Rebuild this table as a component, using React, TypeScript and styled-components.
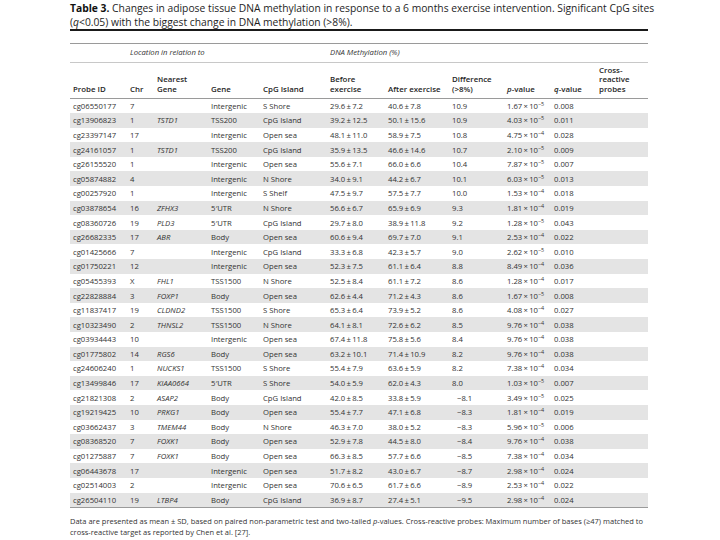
import React from "react";
import styled, { createGlobalStyle } from "styled-components";

const GlobalStyle = createGlobalStyle`
  html, body { margin: 0; padding: 0; background: #ffffff; }
  body { font-family: "Open Sans", "Liberation Sans", sans-serif; color: #2b2b2b; }
`;

const Page = styled.div`
  width: 720px;
  height: 540px;
  box-sizing: border-box;
  padding: 2px 0 0 70px;
  overflow: hidden;
`;

const Caption = styled.p`
  margin: 0;
  width: 640px;
  font-size: 10.3px;
  line-height: 13.5px;
  color: #1e1e1e;
  white-space: nowrap;
  b { font-weight: 700; color: #111; }
`;

const ThickRule = styled.div`
  width: 578px;
  height: 2px;
  background: #1a1a1a;
  margin-bottom: 12px;
`;

const Table = styled.table`
  width: 578px;
  border-collapse: collapse;
  table-layout: fixed;
  border-top: 1px solid #9a9a9a;
  border-bottom: 1px solid #9a9a9a;
  font-size: 7.7px;
`;

const GroupRow = styled.tr`
  height: 19px;
`;

const GroupCell = styled.th`
  font-style: italic;
  font-weight: 400;
  text-align: left;
  vertical-align: top;
  padding: 3px 0 0 3px;
  font-size: 7.7px;
  color: #333;
`;

const HeadRow = styled.tr`
  height: 36px;
  border-top: 1px solid #c8c8c8;
  border-bottom: 1px solid #9a9a9a;
`;

const HeadCell = styled.th`
  font-weight: 600;
  text-align: left;
  vertical-align: bottom;
  padding: 0 0 4px 3px;
  line-height: 9.5px;
  font-size: 7.9px;
  color: #262626;
`;

const Row = styled.tr<{ $shade: boolean }>`
  height: 14.6px;
  background: ${(p) => (p.$shade ? "#e4e4e4" : "#ffffff")};
`;

const Cell = styled.td<{ $italic?: boolean; $neg?: boolean }>`
  padding: 0 0 0 ${(p) => (p.$neg ? "8px" : "3px")};
  white-space: nowrap;
  font-style: ${(p) => (p.$italic ? "italic" : "normal")};
  color: #333;
  vertical-align: middle;
  sup { font-size: 5.4px; vertical-align: 3px; line-height: 0; }
`;

const Footnote = styled.p`
  margin: 8px 0 0 0;
  width: 640px;
  font-size: 7.5px;
  line-height: 11px;
  color: #333;
  white-space: nowrap;
`;

type RowData = [string, string, string, string, string, string, string, string, string, string, string];

const rows: RowData[] = [
  ["cg06550177", "7", "", "Intergenic", "S Shore", "29.6±7.2", "40.6±7.8", "10.9", "1.67", "−5", "0.008"],
  ["cg13906823", "1", "TSTD1", "TSS200", "CpG Island", "39.2±12.5", "50.1±15.6", "10.9", "4.03", "−5", "0.011"],
  ["cg23397147", "17", "", "Intergenic", "Open sea", "48.1±11.0", "58.9±7.5", "10.8", "4.75", "−4", "0.028"],
  ["cg24161057", "1", "TSTD1", "TSS200", "CpG Island", "35.9±13.5", "46.6±14.6", "10.7", "2.10", "−5", "0.009"],
  ["cg26155520", "1", "", "Intergenic", "Open sea", "55.6±7.1", "66.0±6.6", "10.4", "7.87", "−5", "0.007"],
  ["cg05874882", "4", "", "Intergenic", "N Shore", "34.0±9.1", "44.2±6.7", "10.1", "6.03", "−5", "0.013"],
  ["cg00257920", "1", "", "Intergenic", "S Shelf", "47.5±9.7", "57.5±7.7", "10.0", "1.53", "−4", "0.018"],
  ["cg03878654", "16", "ZFHX3", "5′UTR", "N Shore", "56.6±6.7", "65.9±6.9", "9.3", "1.81", "−4", "0.019"],
  ["cg08360726", "19", "PLD3", "5′UTR", "CpG Island", "29.7±8.0", "38.9±11.8", "9.2", "1.28", "−5", "0.043"],
  ["cg26682335", "17", "ABR", "Body", "Open sea", "60.6±9.4", "69.7±7.0", "9.1", "2.53", "−4", "0.022"],
  ["cg01425666", "7", "", "Intergenic", "CpG Island", "33.3±6.8", "42.3±5.7", "9.0", "2.62", "−5", "0.010"],
  ["cg01750221", "12", "", "Intergenic", "Open sea", "52.3±7.5", "61.1±6.4", "8.8", "8.49", "−4", "0.036"],
  ["cg05455393", "X", "FHL1", "TSS1500", "N Shore", "52.5±8.4", "61.1±7.2", "8.6", "1.28", "−4", "0.017"],
  ["cg22828884", "3", "FOXP1", "Body", "Open sea", "62.6±4.4", "71.2±4.3", "8.6", "1.67", "−5", "0.008"],
  ["cg11837417", "19", "CLDND2", "TSS1500", "S Shore", "65.3±6.4", "73.9±5.2", "8.6", "4.08", "−4", "0.027"],
  ["cg10323490", "2", "THNSL2", "TSS1500", "N Shore", "64.1±8.1", "72.6±6.2", "8.5", "9.76", "−4", "0.038"],
  ["cg03934443", "10", "", "Intergenic", "Open sea", "67.4±11.8", "75.8±5.6", "8.4", "9.76", "−4", "0.038"],
  ["cg01775802", "14", "RGS6", "Body", "Open sea", "63.2±10.1", "71.4±10.9", "8.2", "9.76", "−4", "0.038"],
  ["cg24606240", "1", "NUCKS1", "TSS1500", "S Shore", "55.4±7.9", "63.6±5.9", "8.2", "7.38", "−4", "0.034"],
  ["cg13499846", "17", "KIAA0664", "5′UTR", "S Shore", "54.0±5.9", "62.0±4.3", "8.0", "1.03", "−5", "0.007"],
  ["cg21821308", "2", "ASAP2", "Body", "CpG Island", "42.0±8.5", "33.8±5.9", "−8.1", "3.49", "−5", "0.025"],
  ["cg19219425", "10", "PRKG1", "Body", "Open sea", "55.4±7.7", "47.1±6.8", "−8.3", "1.81", "−4", "0.019"],
  ["cg03662437", "3", "TMEM44", "Body", "N Shore", "46.3±7.0", "38.0±5.2", "−8.3", "5.96", "−5", "0.006"],
  ["cg08368520", "7", "FOXK1", "Body", "Open sea", "52.9±7.8", "44.5±8.0", "−8.4", "9.76", "−4", "0.038"],
  ["cg01275887", "7", "FOXK1", "Body", "Open sea", "66.3±8.5", "57.7±6.6", "−8.5", "7.38", "−4", "0.034"],
  ["cg06443678", "17", "", "Intergenic", "Open sea", "51.7±8.2", "43.0±6.7", "−8.7", "2.98", "−4", "0.024"],
  ["cg02514003", "2", "", "Intergenic", "Open sea", "70.6±6.5", "61.7±6.6", "−8.9", "2.53", "−4", "0.022"],
  ["cg26504110", "19", "LTBP4", "Body", "CpG Island", "36.9±8.7", "27.4±5.1", "−9.5", "2.98", "−4", "0.024"],
];

const widths = [57, 27, 54, 52, 67, 58, 64, 55, 47, 45, 52];

const pm = (s: string) => s.replace("±", "\u2009±\u2009");

export default function App() {
  return (
    <>
      <GlobalStyle />
      <Page>
        <Caption>
          <b>Table 3.</b> Changes in adipose tissue DNA methylation in response to a 6 months exercise intervention. Significant CpG sites
          <br />
          (<i>q</i>&lt;0.05) with the biggest change in DNA methylation (&gt;8%).
        </Caption>
        <ThickRule />
        <Table>
          <colgroup>
            {widths.map((w, i) => (
              <col key={i} style={{ width: w }} />
            ))}
          </colgroup>
          <thead>
            <GroupRow>
              <GroupCell />
              <GroupCell colSpan={4}>Location in relation to</GroupCell>
              <GroupCell colSpan={5}>DNA Methylation (%)</GroupCell>
              <GroupCell />
            </GroupRow>
            <HeadRow>
              <HeadCell>Probe ID</HeadCell>
              <HeadCell>Chr</HeadCell>
              <HeadCell>
                Nearest
                <br />
                Gene
              </HeadCell>
              <HeadCell>Gene</HeadCell>
              <HeadCell>CpG Island</HeadCell>
              <HeadCell>
                Before
                <br />
                exercise
              </HeadCell>
              <HeadCell>After exercise</HeadCell>
              <HeadCell>
                Difference
                <br />
                (&gt;8%)
              </HeadCell>
              <HeadCell>
                <i>p</i>-value
              </HeadCell>
              <HeadCell>
                <i>q</i>-value
              </HeadCell>
              <HeadCell>
                Cross-
                <br />
                reactive
                <br />
                probes
              </HeadCell>
            </HeadRow>
          </thead>
          <tbody>
            {rows.map((r, i) => (
              <Row key={r[0]} $shade={i % 2 === 1}>
                <Cell>{r[0]}</Cell>
                <Cell>{r[1]}</Cell>
                <Cell $italic>{r[2]}</Cell>
                <Cell>{r[3]}</Cell>
                <Cell>{r[4]}</Cell>
                <Cell>{pm(r[5])}</Cell>
                <Cell>{pm(r[6])}</Cell>
                <Cell $neg={r[7].startsWith("−")}>{r[7]}</Cell>
                <Cell>
                  {r[8]}
                  {"\u2009×\u2009"}10<sup>{r[9]}</sup>
                </Cell>
                <Cell>{r[10]}</Cell>
                <Cell />
              </Row>
            ))}
          </tbody>
        </Table>
        <Footnote>
          Data are presented as mean ± SD, based on paired non-parametric test and two-tailed <i>p</i>-values. Cross-reactive probes: Maximum number of bases (≥47) matched to
          <br />
          cross-reactive target as reported by Chen et al. [27].
        </Footnote>
      </Page>
    </>
  );
}
